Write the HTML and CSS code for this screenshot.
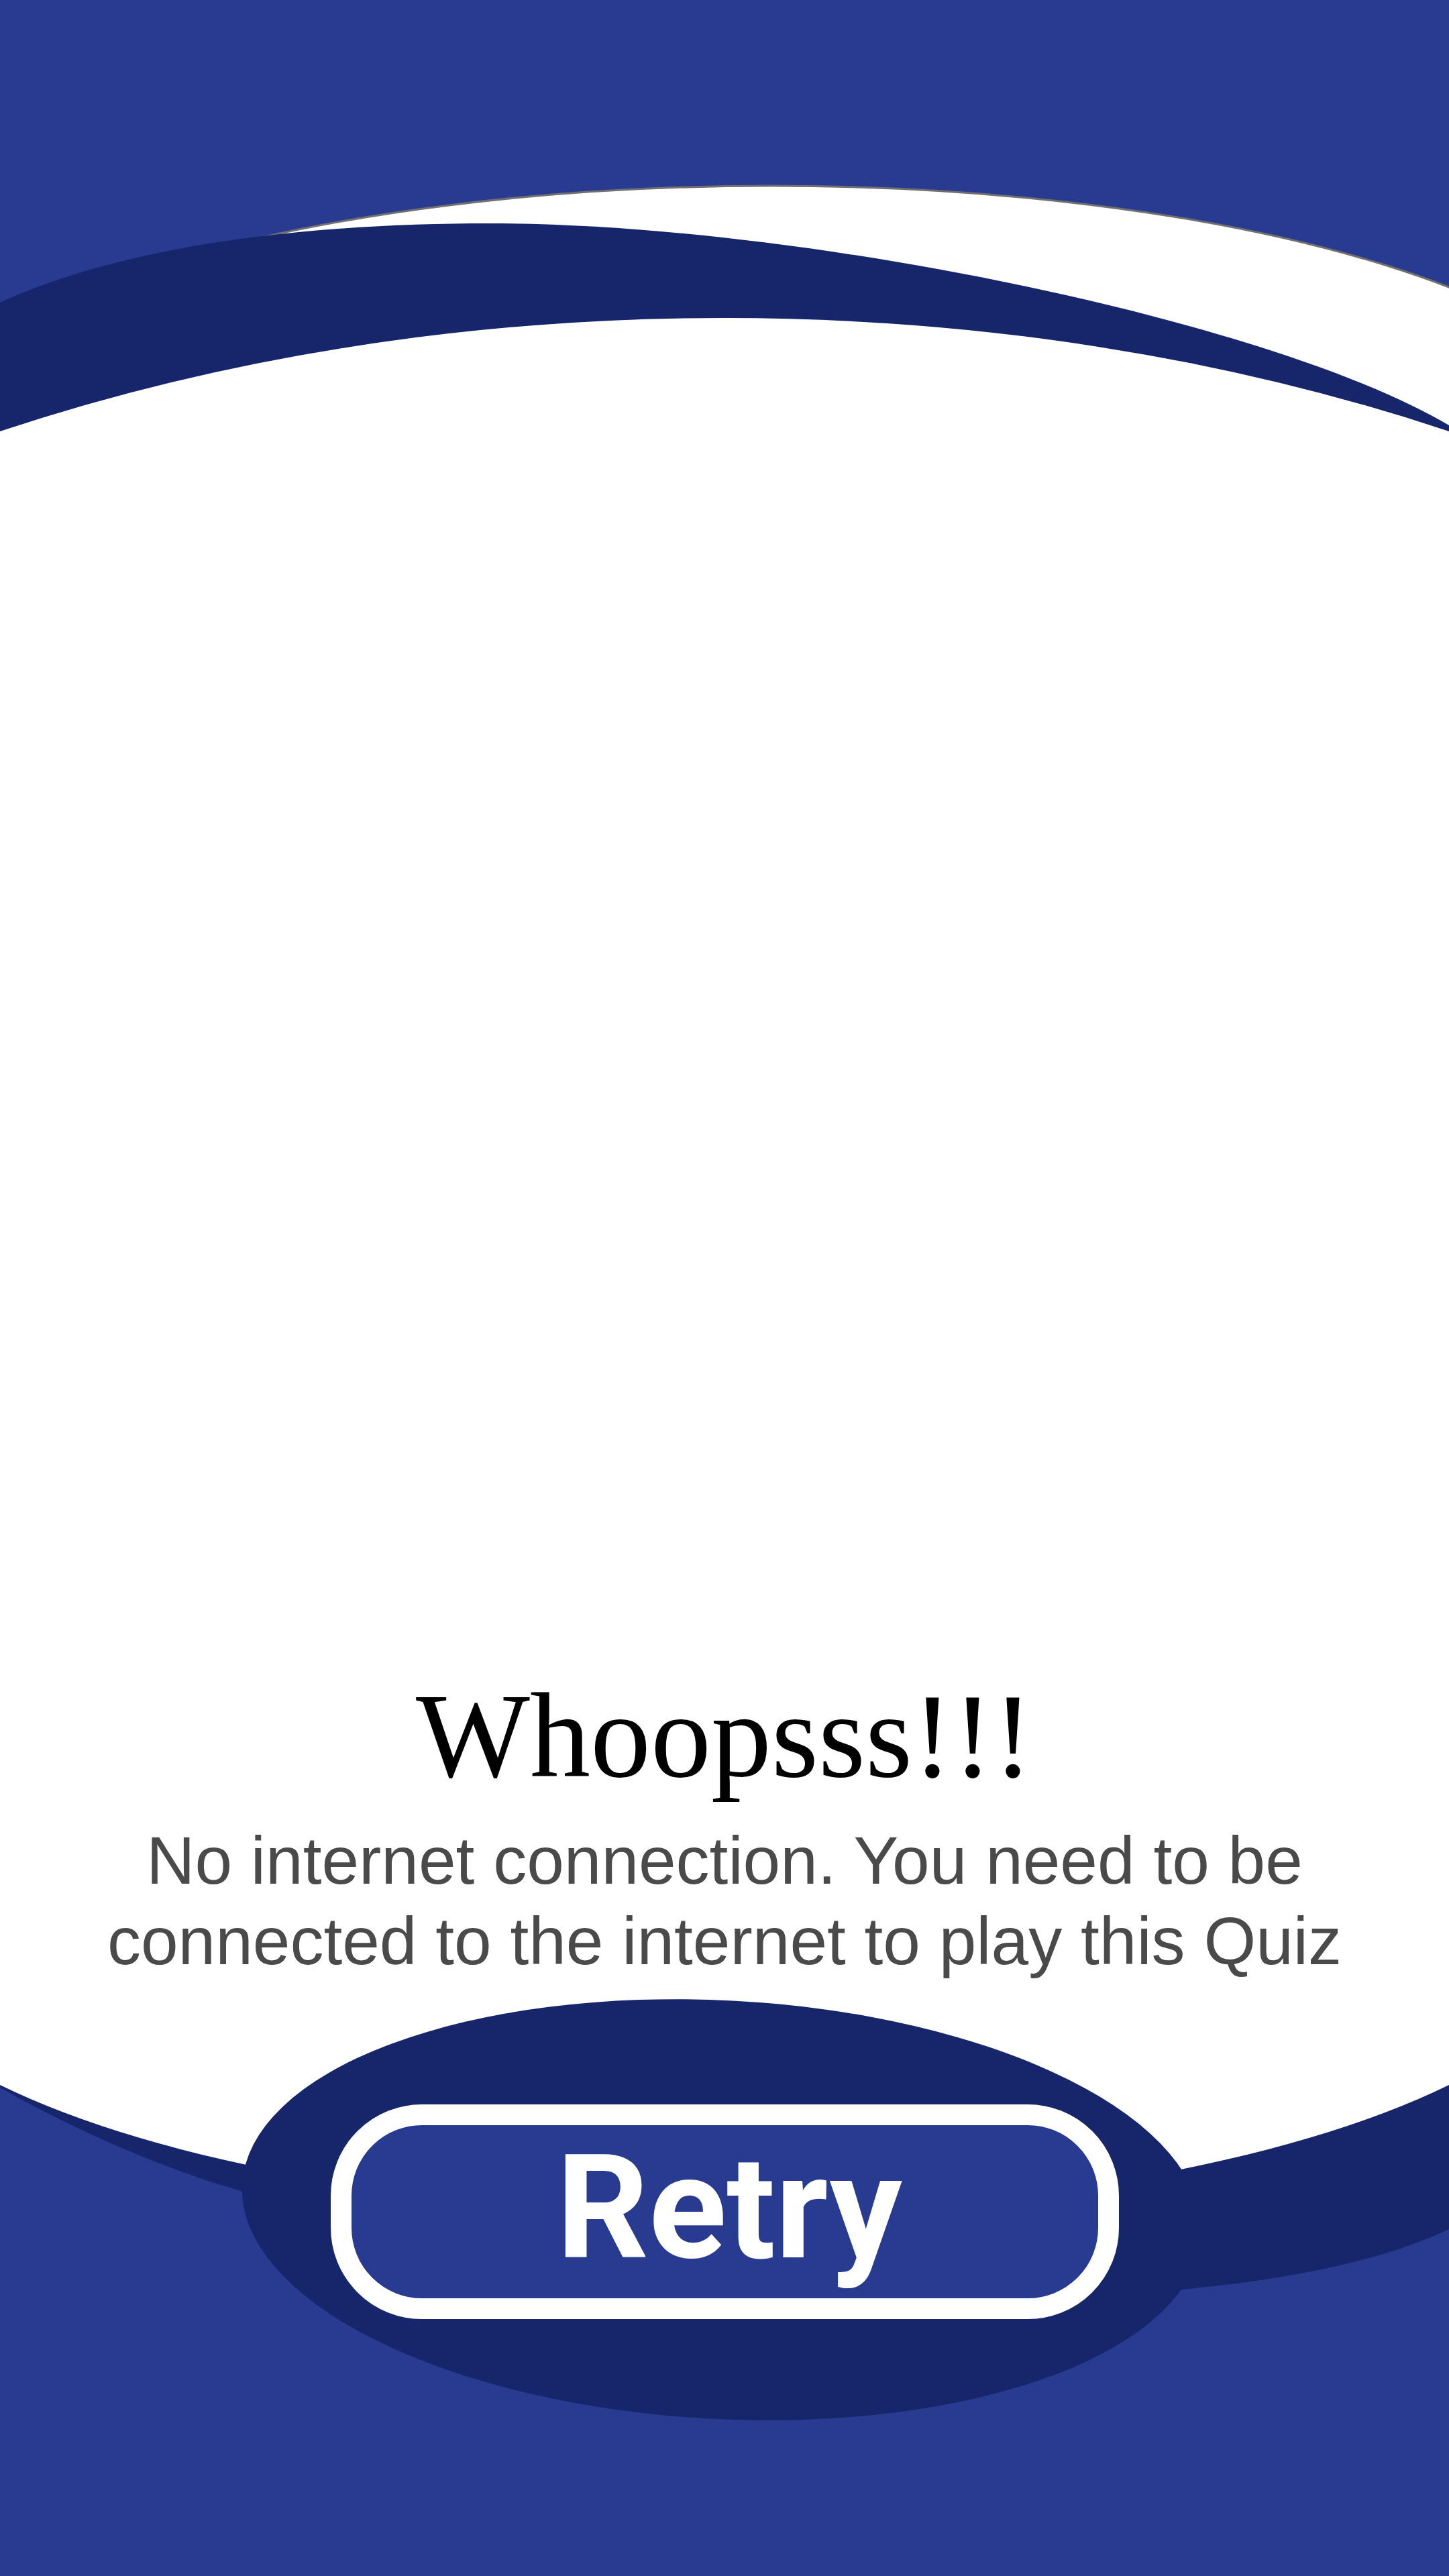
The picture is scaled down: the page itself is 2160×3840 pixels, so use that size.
FILE: index.html
```html
<!DOCTYPE html>
<html lang="en">
<head>
<meta charset="utf-8">
<title>No internet connection</title>
<link rel="stylesheet" href="styles.css">
</head>
<body>
<div class="screen">
  <svg class="backdrop" viewBox="0 0 2160 3840" preserveAspectRatio="none" aria-hidden="true">
    <ellipse class="cap" cx="1150" cy="685" rx="1300" ry="408"/>
    <path class="dark" d="M0,451 C200,360 480,333 730,333 C1200,333 1900,480 2160,634 L2160,1200 L0,1200 Z"/>
    <path class="dark" d="M0,3000 L0,3112 C120,3180 250,3235 362,3267 C900,3420 1400,3430 1761,3413 C1900,3400 2050,3375 2160,3323 L2160,3000 Z"/>
    <path class="sheet" d="M0,643 A2268,1401 0 0 1 2160,643 L2160,3108 A1300,426 0 0 1 0,3108 Z"/>
    <ellipse class="dark" cx="1076" cy="3294" rx="716" ry="312" transform="rotate(3 1076 3294)"/>
  </svg>
  <main class="content">
    <h1 class="title">Whoopsss!!!</h1>
    <p class="message">No internet connection. You need to be connected to the internet to play this Quiz</p>
    <button class="retry" type="button">Retry</button>
  </main>
</div>
</body>
</html>
```
FILE: styles.css
```css
body {
  margin: 0;
}

.screen {
  position: relative;
  width: 2160px;
  height: 3840px;
  overflow: hidden;
  background: #283b90;
}

.backdrop {
  position: absolute;
  top: 0;
  left: 0;
  width: 100%;
  height: 100%;
  display: block;
}

.cap {
  fill: #ffffff;
  stroke: #707070;
  stroke-width: 3;
}

.dark {
  fill: #17256a;
}

.sheet {
  fill: #ffffff;
}

.content {
  position: relative;
  display: flex;
  flex-direction: column;
  align-items: center;
  padding-top: 2488px;
}

.title {
  margin: 0;
  font-family: "Liberation Serif", "Times New Roman", serif;
  font-weight: 400;
  font-size: 180px;
  line-height: 200px;
  color: #000000;
}

.message {
  margin: 25px 0 0;
  width: 1960px;
  text-align: center;
  font-family: "Liberation Sans", Arial, sans-serif;
  font-size: 100px;
  line-height: 120px;
  color: #4a4a4a;
}

.retry {
  margin-top: 184px;
  box-sizing: border-box;
  width: 1175px;
  height: 320px;
  padding: 0 0 12px 14px;
  border: 31px solid #ffffff;
  border-radius: 136px;
  background: #283b90;
  color: #ffffff;
  font-family: Roboto, "Liberation Sans", sans-serif;
  font-weight: 700;
  font-size: 215px;
  line-height: 243px;
  cursor: pointer;
}
```
